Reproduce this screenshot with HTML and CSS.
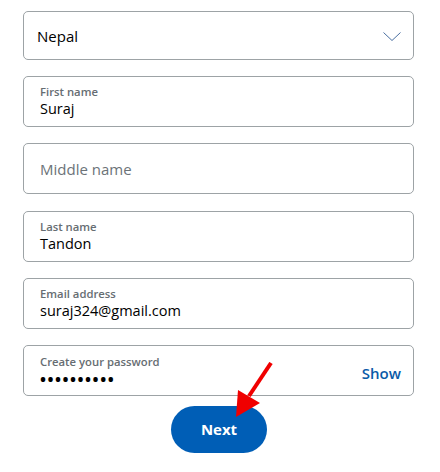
FILE: index.html
```html
<!DOCTYPE html>
<html>
<head>
<meta charset="utf-8">
<link rel="stylesheet" href="styles.css">
</head>
<body>
<div class="form">
  <div class="field select">
    <span class="value big">Nepal</span>
    <svg class="chev" width="18" height="10" viewBox="0 0 18 10"><polyline points="0.5,0.5 9,8.5 17.5,0.5" fill="none" stroke="#4a6fa0" stroke-width="1"/></svg>
  </div>
  <div class="field">
    <span class="label">First name</span>
    <span class="value">Suraj</span>
  </div>
  <div class="field empty">
    <span class="placeholder">Middle name</span>
  </div>
  <div class="field">
    <span class="label">Last name</span>
    <span class="value">Tandon</span>
  </div>
  <div class="field">
    <span class="label">Email address</span>
    <span class="value">suraj324@gmail.com</span>
  </div>
  <div class="field pw">
    <div class="pw-main">
      <span class="label">Create your password</span>
      <span class="value dots">••••••••••</span>
    </div>
    <span class="show">Show</span>
  </div>
  <div class="actions">
    <button class="next">Next</button>
    <svg class="arrow" width="50" height="60" viewBox="0 0 50 60">
      <line x1="38" y1="1" x2="16" y2="34" stroke="#f00000" stroke-width="4"/>
      <polygon points="3,55 5,28 27,41" fill="#f00000"/>
    </svg>
  </div>
</div>
</body>
</html>
```
FILE: styles.css
```css
* { box-sizing: border-box; }
body {
  margin: 0;
  background: #ffffff;
  font-family: "Open Sans", "Noto Sans", sans-serif;
  color: #000;
}
.form {
  padding: 11px 0 0 23px;
  width: 414px;
  display: flex;
  flex-direction: column;
  gap: 16.2px;
}
.field {
  height: 51px;
  border: 1px solid #9da3a6;
  border-radius: 5px;
  padding: 0 0 0 16px;
  display: flex;
  flex-direction: column;
  justify-content: center;
}
.select {
  height: 49px;
  flex-direction: row;
  align-items: center;
  justify-content: space-between;
  padding: 0 12px 0 13px;
}
.chev { margin-top: 3px; }
.label {
  font-size: 11.3px;
  line-height: 15px;
  color: #666d72;
  font-weight: 600;
}
.value {
  font-size: 14.5px;
  line-height: 20px;
  color: #000;
}
.big { font-size: 15px; }
.placeholder {
  font-size: 15px;
  color: #6c7378;
}
.pw {
  flex-direction: row;
  align-items: center;
  justify-content: space-between;
  padding-right: 12px;
}
.pw-main {
  display: flex;
  flex-direction: column;
  padding-top: 2px;
}
.dots {
  font-size: 16px;
  font-weight: 700;
  letter-spacing: 1.5px;
  line-height: 20px;
}
.show {
  color: #0a5ba8;
  font-size: 15px;
  font-weight: 600;
  margin-top: 6px;
}
.actions {
  position: relative;
  display: flex;
  justify-content: center;
  margin-top: -6.2px;
  padding-left: 1px;
}
.next {
  width: 96px;
  height: 47px;
  border: none;
  border-radius: 24px;
  background: #005eb6;
  color: #fff;
  font-family: "Open Sans", sans-serif;
  font-size: 15px;
  font-weight: 700;
}
.arrow {
  position: absolute;
  left: 210px;
  top: -44px;
}
```
